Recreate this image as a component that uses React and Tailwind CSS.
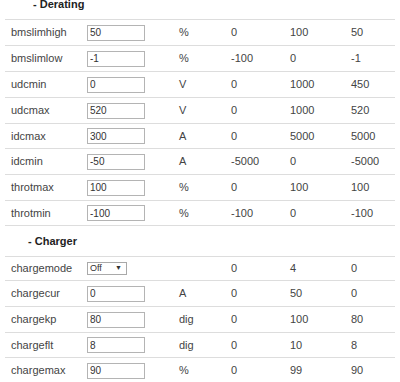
const DERATING = [
  { name: 'bmslimhigh', value: '50', unit: '%', min: '0', max: '100', def: '50' },
  { name: 'bmslimlow', value: '-1', unit: '%', min: '-100', max: '0', def: '-1' },
  { name: 'udcmin', value: '0', unit: 'V', min: '0', max: '1000', def: '450' },
  { name: 'udcmax', value: '520', unit: 'V', min: '0', max: '1000', def: '520' },
  { name: 'idcmax', value: '300', unit: 'A', min: '0', max: '5000', def: '5000', h: 'h-[25px]' },
  { name: 'idcmin', value: '-50', unit: 'A', min: '-5000', max: '0', def: '-5000' },
  { name: 'throtmax', value: '100', unit: '%', min: '0', max: '100', def: '100' },
  { name: 'throtmin', value: '-100', unit: '%', min: '-100', max: '0', def: '-100', h: 'h-[25px]' },
];

const CHARGER = [
  { name: 'chargemode', select: 'Off', unit: '', min: '0', max: '4', def: '0', h: 'h-[24px]' },
  { name: 'chargecur', value: '0', unit: 'A', min: '0', max: '50', def: '0' },
  { name: 'chargekp', value: '80', unit: 'dig', min: '0', max: '100', def: '80' },
  { name: 'chargeflt', value: '8', unit: 'dig', min: '0', max: '10', def: '8', h: 'h-[25px]' },
  { name: 'chargemax', value: '90', unit: '%', min: '0', max: '99', def: '90' },
];

function Header({ title, className = '' }) {
  return (
    <div className={`flex h-[31px] items-center border-t border-[#dddddd] ${className}`}>
      <div className="text-[11px] font-bold text-[#222]">- {title}</div>
    </div>
  );
}

function Row({ row }) {
  return (
    <div className={`flex items-center border-t border-[#dddddd] ${row.h || 'h-[26px]'}`}>
      <div className="w-[77px] pl-[6px]">{row.name}</div>
      <div className="w-[92px] pl-[5px]">
        {row.select ? (
          <div className="flex h-[13px] w-[40px] items-center justify-between border border-[#a9a9a9] bg-white pl-[2px] pr-[4px] text-[9px] text-[#333]">
            <span>{row.select}</span>
            <span className="text-[7px]">▼</span>
          </div>
        ) : (
          <input
            readOnly
            value={row.value}
            className="box-border h-[16px] w-[58px] border border-[#b4b4b4] bg-white px-[2px] text-[10px] text-[#333] outline-none"
          />
        )}
      </div>
      <div className="w-[52px] pl-[5px]">{row.unit}</div>
      <div className="w-[59px] pl-[5px]">{row.min}</div>
      <div className="w-[61px] pl-[5px]">{row.max}</div>
      <div className="w-[49px] pl-[5px]">{row.def}</div>
    </div>
  );
}

export default function App() {
  return (
    <div
      className="h-[382px] w-[400px] overflow-hidden bg-white text-[11px] text-[#444]"
      style={{ fontFamily: '"Liberation Sans", Arial, sans-serif' }}
    >
      <div className="ml-[5px] w-[390px]">
        <Header title="Derating" className="-mt-[12px] pl-[28px]" />
        {DERATING.map((row) => (
          <Row key={row.name} row={row} />
        ))}
        <Header title="Charger" className="pl-[23px]" />
        {CHARGER.map((row) => (
          <Row key={row.name} row={row} />
        ))}
      </div>
    </div>
  );
}
